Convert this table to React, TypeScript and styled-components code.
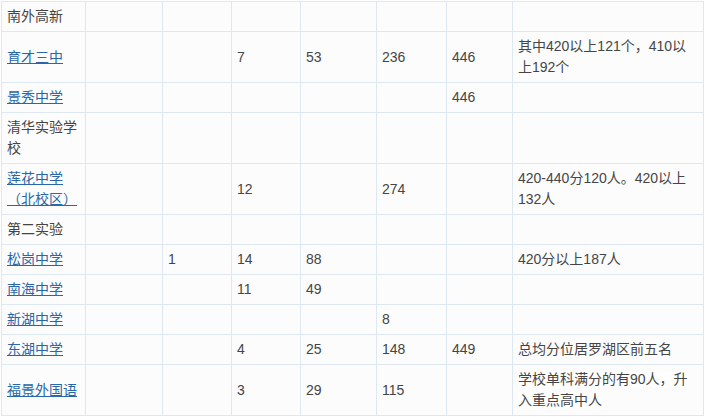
import React from 'react'
import styled, { createGlobalStyle } from 'styled-components'

const GlobalStyle = createGlobalStyle`
  html, body {
    margin: 0;
    padding: 0;
    background: #ffffff;
  }
`

const Wrapper = styled.div`
  padding: 1px 0 0 1px;
  font-family: "Liberation Sans", "Noto Sans CJK SC", sans-serif;
  font-size: 14px;
  color: #454545;
`

const Table = styled.table`
  border-collapse: collapse;
  table-layout: fixed;
  width: 703px;
  background: #fcfcfc;
`

const Cell = styled.td`
  border: 1px solid #dde8f3;
  padding: 4px 5px;
  line-height: 21px;
  vertical-align: middle;
`

const SchoolLink = styled.a`
  color: #2a67a8;
  text-decoration: underline;
  cursor: pointer;
`

const Note = styled.span<{ $plain?: boolean }>`
  background: ${({ $plain }) => ($plain ? '#ffffff' : 'transparent')};
`

type Row = {
  name: string
  link?: boolean
  cells: string[]
  note?: React.ReactNode
}

const widths = [84, 77, 69, 69, 76, 70, 66, 191]

const rows: Row[] = [
  { name: '南外高新', cells: [] },
  {
    name: '育才三中',
    link: true,
    cells: ['', '', '7', '53', '236', '446'],
    note: '其中420以上121个，410以上192个',
  },
  { name: '景秀中学', link: true, cells: ['', '', '', '', '', '446'] },
  { name: '清华实验学校', cells: [] },
  {
    name: '莲花中学（北校区）',
    link: true,
    cells: ['', '', '12', '', '274', ''],
    note: '420-440分120人。420以上132人',
  },
  { name: '第二实验', cells: [] },
  { name: '松岗中学', link: true, cells: ['', '1', '14', '88', '', ''], note: '420分以上187人' },
  { name: '南海中学', link: true, cells: ['', '', '11', '49', '', ''] },
  { name: '新湖中学', link: true, cells: ['', '', '', '', '8', ''] },
  {
    name: '东湖中学',
    link: true,
    cells: ['', '', '4', '25', '148', '449'],
    note: '总均分位居罗湖区前五名',
  },
  {
    name: '福景外国语',
    link: true,
    cells: ['', '', '3', '29', '115', ''],
    note: <Note $plain>学校单科满分的有90人，升入重点高中人</Note>,
  },
]

export default function App() {
  return (
    <Wrapper>
      <GlobalStyle />
      <Table>
        <colgroup>
          {widths.map((w, i) => (
            <col key={i} style={{ width: w }} />
          ))}
        </colgroup>
        <tbody>
          {rows.map((row) => (
            <tr key={row.name}>
              <Cell>{row.link ? <SchoolLink>{row.name}</SchoolLink> : row.name}</Cell>
              {[0, 1, 2, 3, 4, 5].map((i) => (
                <Cell key={i}>{row.cells[i] || ''}</Cell>
              ))}
              <Cell>{row.note || ''}</Cell>
            </tr>
          ))}
        </tbody>
      </Table>
    </Wrapper>
  )
}
